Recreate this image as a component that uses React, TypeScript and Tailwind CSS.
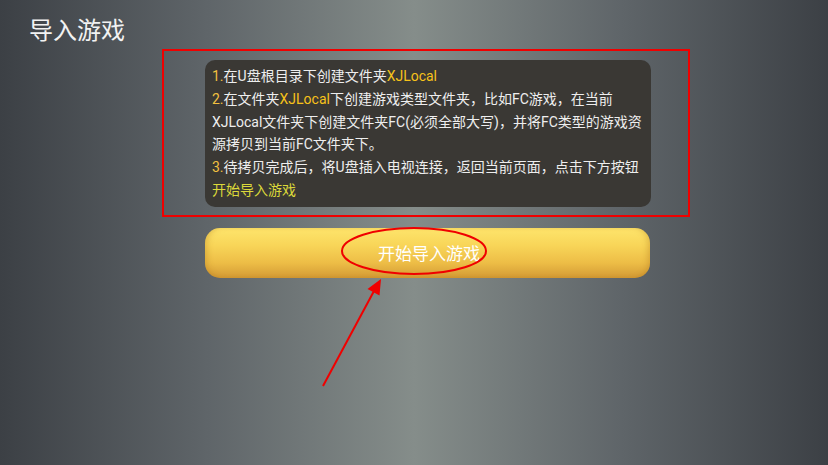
import React from "react";

const font = { fontFamily: "Roboto, 'Noto Sans CJK SC', sans-serif" };

export default function App() {
  return (
    <div
      className="relative h-[465px] w-[828px] overflow-hidden bg-[linear-gradient(to_right,#3c4045_0%,#5f6569_25%,#858d8a_50%,#5f6569_75%,#3c4045_100%)]"
      style={font}
    >
      <h1 className="pl-[29px] pt-[19px] text-[24px] leading-[24px] font-normal text-[#f2f2f2]">
        导入游戏
      </h1>

      {/* annotated instruction panel */}
      <div className="ml-[162px] mt-[6px] w-[528px] border-2 border-[#f00000] pb-[8px] pl-[41px] pr-[37px] pt-[9px]">
        <div className="rounded-[10px] bg-[#3a3834] px-[7px] py-[5px] text-[14px] leading-[22.8px] whitespace-nowrap text-[#eeeeee]">
          <p>
            <span className="text-[#f2c040]">1.</span>在U盘根目录下创建文件夹
            <span className="text-[#f7c21a]">XJLocal</span>
          </p>
          <p>
            <span className="text-[#f2c040]">2.</span>在文件夹
            <span className="text-[#f7c21a]">XJLocal</span>
            下创建游戏类型文件夹，比如FC游戏，在当前
          </p>
          <p>XJLocal文件夹下创建文件夹FC(必须全部大写)，并将FC类型的游戏资</p>
          <p>源拷贝到当前FC文件夹下。</p>
          <p>
            <span className="text-[#f2c040]">3.</span>
            待拷贝完成后，将U盘插入电视连接，返回当前页面，点击下方按钮
          </p>
          <p className="text-[#dcd83a]">开始导入游戏</p>
        </div>
      </div>

      <button className="ml-[205px] mt-[11px] flex h-[50px] w-[445px] items-center justify-center rounded-[15px] bg-[linear-gradient(to_bottom,#fee56c_0%,#f8d558_35%,#edbd46_70%,#d39a35_100%)] text-[17px] text-white shadow-[inset_5px_0_6px_-3px_rgba(170,110,20,0.35),inset_-5px_0_6px_-3px_rgba(170,110,20,0.35)]">
        <span className="pl-[3px] pt-[4px]">开始导入游戏</span>
      </button>

      {/* red annotation marks */}
      <svg className="pointer-events-none absolute inset-0" width="828" height="465">
        <ellipse cx="414" cy="251" rx="72" ry="23" fill="none" stroke="#f00000" strokeWidth="2" />
        <line x1="323" y1="386" x2="374" y2="291" stroke="#f00000" strokeWidth="2" />
        <polygon points="381,279 367.5,289 379.5,295.5" fill="#f00000" />
      </svg>
    </div>
  );
}
